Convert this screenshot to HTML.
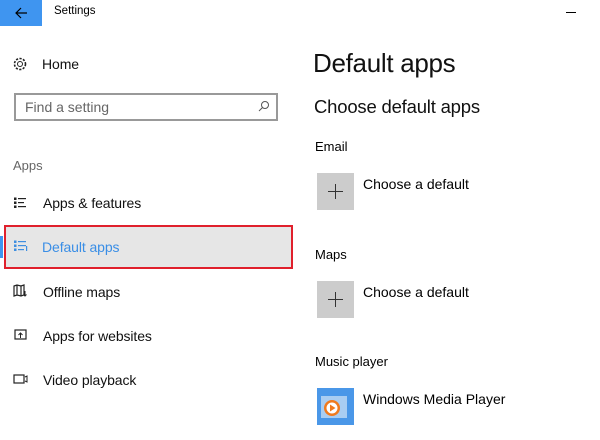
<!DOCTYPE html>
<html><head><style>
*{margin:0;padding:0;box-sizing:border-box}
body{width:600px;height:440px;background:#fff;position:relative;overflow:hidden;font-family:"Liberation Sans",sans-serif;color:#000}
.a{position:absolute;white-space:nowrap}
.nav{font-size:14px;color:#111;letter-spacing:-0.1px}
</style></head><body>
<div class="a" style="left:0;top:0;width:42px;height:26px;background:#3f95f0"></div>
<svg class="a" style="left:14px;top:6px" width="14" height="14" viewBox="0 0 14 14"><path d="M13 7H2M7 2L2 7l5 5" fill="none" stroke="#000" stroke-width="1.2"/></svg>
<div class="a" style="left:54px;top:5px;font-size:11.5px">Settings</div>
<div class="a" style="left:566px;top:12px;width:10px;height:1px;background:#000"></div>

<svg class="a" style="left:12px;top:56px" width="16" height="16" viewBox="0 0 16 16"><circle cx="8" cy="8" r="2.5" fill="none" stroke="#222"/><circle cx="8" cy="8" r="5.5" fill="none" stroke="#222" stroke-width="1.6" stroke-dasharray="2.2 1.4"/></svg>
<div class="a nav" style="left:42px;top:56px">Home</div>
<div class="a" style="left:14px;top:93px;width:264px;height:28px;border:2px solid #999"></div>
<div class="a" style="left:25px;top:99px;font-size:14px;color:#666">Find a setting</div>
<svg class="a" style="left:258px;top:100px" width="12" height="12" viewBox="0 0 12 12"><circle cx="7" cy="5" r="3.5" fill="none" stroke="#555"/><path d="M4.5 7.5L1 11" stroke="#555"/></svg>
<div class="a" style="left:13px;top:158px;font-size:13px;color:#666">Apps</div>

<svg class="a" style="left:13px;top:197px" width="14" height="12" viewBox="0 0 14 12"><g fill="#222"><rect x="1" y="0.5" width="2.5" height="2.5"/><rect x="1" y="4.5" width="2.5" height="2.5"/><rect x="1" y="8.5" width="2.5" height="2.5"/><rect x="5" y="1" width="8" height="1.2"/><rect x="5" y="5" width="6" height="1.2"/><rect x="5" y="9" width="8" height="1.2"/></g></svg>
<div class="a nav" style="left:43px;top:195px">Apps &amp; features</div>

<div class="a" style="left:0;top:236px;width:3px;height:22px;background:#3f95f0"></div>
<div class="a" style="left:4px;top:225px;width:289px;height:44px;background:#e6e6e6;border:2px solid #e0202c"></div>
<svg class="a" style="left:13px;top:240px" width="16" height="12" viewBox="0 0 16 12"><g fill="#3f8fe0"><rect x="1" y="0.5" width="2.5" height="2.5"/><rect x="1" y="4.5" width="2.5" height="2.5"/><rect x="1" y="8.5" width="2.5" height="2.5"/><rect x="5" y="1" width="8" height="1.2"/><rect x="5" y="5" width="8" height="1.2"/><rect x="5" y="9" width="6" height="1.2"/><rect x="13" y="6" width="1.2" height="5"/></g></svg>
<div class="a nav" style="left:42px;top:239px;color:#3a8ee6">Default apps</div>

<svg class="a" style="left:13px;top:284px" width="16" height="14" viewBox="0 0 16 14"><path d="M1 2l3-1 4 1 3-1v10l-3 1-4-1-3 1z M4 1v10 M8 2v10" fill="none" stroke="#222" stroke-width="1.2"/><path d="M12 7v5M10.5 10.5l1.5 1.5 1.5-1.5" fill="none" stroke="#222"/></svg>
<div class="a nav" style="left:43px;top:284px">Offline maps</div>

<svg class="a" style="left:14px;top:329px" width="14" height="12" viewBox="0 0 14 12"><rect x="1" y="1" width="11" height="9" fill="none" stroke="#222" stroke-width="1.2"/><path d="M6.5 9V4M4.5 6l2-2 2 2" fill="none" stroke="#222"/></svg>
<div class="a nav" style="left:43px;top:328px">Apps for websites</div>

<svg class="a" style="left:13px;top:374px" width="16" height="10" viewBox="0 0 16 10"><rect x="1" y="1" width="10" height="8" fill="none" stroke="#222" stroke-width="1.2"/><path d="M12 3l2-1v6l-2-1" fill="none" stroke="#222"/></svg>
<div class="a nav" style="left:43px;top:372px">Video playback</div>

<div class="a" style="left:313px;top:48px;font-size:26px;color:#111;letter-spacing:-0.3px">Default apps</div>
<div class="a" style="left:314px;top:96px;font-size:18.5px;color:#111;letter-spacing:-0.2px">Choose default apps</div>
<div class="a" style="left:315px;top:139px;font-size:13px">Email</div>
<div class="a" style="left:317px;top:173px;width:37px;height:37px;background:#cccccc"></div>
<svg class="a" style="left:327px;top:183px" width="17" height="17"><path d="M8.5 1v15M1 8.5h15" stroke="#333"/></svg>
<div class="a" style="left:363px;top:176px;font-size:14px">Choose a default</div>

<div class="a" style="left:315px;top:247px;font-size:13px">Maps</div>
<div class="a" style="left:317px;top:281px;width:37px;height:37px;background:#cccccc"></div>
<svg class="a" style="left:327px;top:291px" width="17" height="17"><path d="M8.5 1v15M1 8.5h15" stroke="#333"/></svg>
<div class="a" style="left:363px;top:284px;font-size:14px">Choose a default</div>

<div class="a" style="left:315px;top:354px;font-size:13px">Music player</div>
<div class="a" style="left:317px;top:388px;width:37px;height:37px;background:#4a97e8"></div>
<div class="a" style="left:321px;top:396px;width:26px;height:22px;background:#a9cdf2"></div>
<svg class="a" style="left:322px;top:398px" width="20" height="20"><circle cx="10" cy="10" r="8" fill="#f07a1e"/><circle cx="10" cy="10" r="5.5" fill="#fff"/><path d="M8 6.5v7l5.5-3.5z" fill="#f07a1e"/></svg>
<div class="a" style="left:363px;top:391px;font-size:14px">Windows Media Player</div>
</body></html>
